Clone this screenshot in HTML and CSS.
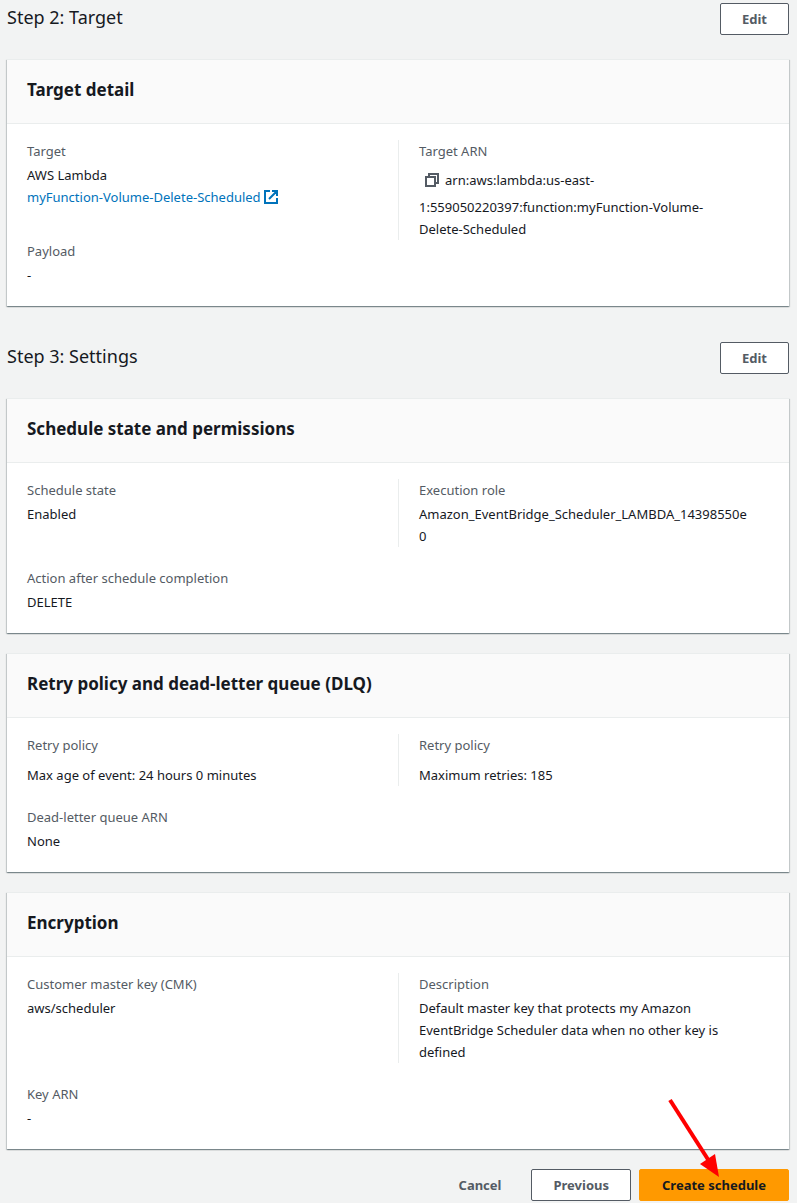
FILE: index.html
```html
<!DOCTYPE html>
<html lang="en">
<head>
<meta charset="utf-8">
<title>Create schedule</title>
<link rel="stylesheet" href="styles.css">
</head>
<body>
<main class="page">
  <header class="step">
    <h2 class="step-title">Step 2: Target</h2>
    <button class="btn" type="button">Edit</button>
  </header>

  <section class="panel">
    <h3 class="panel-title">Target detail</h3>
    <div class="panel-body panel-body-tight">
      <div class="row">
        <div class="field">
          <div class="label">Target</div>
          <div class="value">AWS Lambda</div>
          <div class="value"><a class="link" href="#">myFunction-Volume-Delete-Scheduled
            <svg class="icon" viewBox="0 0 14 14" aria-hidden="true"><path d="M6 1H1v12h12V8M8 1h5v5M13 1L5 9"/></svg></a></div>
        </div>
        <div class="field">
          <div class="label">Target ARN</div>
          <div class="value"><span class="copy-line"><button class="copy" type="button" aria-label="Copy ARN"><svg class="icon" viewBox="0 0 14 14" aria-hidden="true"><path d="M1 4h9v9H1zM4 4V1h9v9h-3"/></svg></button>arn:aws:lambda:us-east-</span>1:559050220397:function:myFunction-Volume-<br>Delete-Scheduled</div>
        </div>
      </div>
      <div class="row">
        <div class="field">
          <div class="label">Payload</div>
          <div class="value">-</div>
        </div>
      </div>
    </div>
  </section>

  <header class="step step-next">
    <h2 class="step-title">Step 3: Settings</h2>
    <button class="btn" type="button">Edit</button>
  </header>

  <section class="panel">
    <h3 class="panel-title">Schedule state and permissions</h3>
    <div class="panel-body">
      <div class="row">
        <div class="field">
          <div class="label">Schedule state</div>
          <div class="value">Enabled</div>
        </div>
        <div class="field">
          <div class="label">Execution role</div>
          <div class="value">Amazon_EventBridge_Scheduler_LAMBDA_14398550e<br>0</div>
        </div>
      </div>
      <div class="row">
        <div class="field">
          <div class="label">Action after schedule completion</div>
          <div class="value">DELETE</div>
        </div>
      </div>
    </div>
  </section>

  <section class="panel">
    <h3 class="panel-title">Retry policy and dead-letter queue (DLQ)</h3>
    <div class="panel-body">
      <div class="row">
        <div class="field field-spaced">
          <div class="label">Retry policy</div>
          <div class="value">Max age of event: 24 hours 0 minutes</div>
        </div>
        <div class="field field-spaced">
          <div class="label">Retry policy</div>
          <div class="value">Maximum retries: 185</div>
        </div>
      </div>
      <div class="row">
        <div class="field">
          <div class="label">Dead-letter queue ARN</div>
          <div class="value">None</div>
        </div>
      </div>
    </div>
  </section>

  <section class="panel">
    <h3 class="panel-title">Encryption</h3>
    <div class="panel-body">
      <div class="row">
        <div class="field">
          <div class="label">Customer master key (CMK)</div>
          <div class="value">aws/scheduler</div>
        </div>
        <div class="field">
          <div class="label">Description</div>
          <div class="value">Default master key that protects my Amazon<br>EventBridge Scheduler data when no other key is<br>defined</div>
        </div>
      </div>
      <div class="row">
        <div class="field">
          <div class="label">Key ARN</div>
          <div class="value">-</div>
        </div>
      </div>
    </div>
  </section>

  <footer class="actions">
    <button class="btn btn-plain" type="button">Cancel</button>
    <button class="btn" type="button">Previous</button>
    <div class="create">
      <button class="btn btn-primary" type="button">Create schedule</button>
      <svg class="arrow" viewBox="0 0 60 84" aria-hidden="true"><path class="arrow-line" d="M7 4L46 65"/><path class="arrow-head" d="M37 68L52 58L56 81Z"/></svg>
    </div>
  </footer>
</main>
</body>
</html>
```
FILE: styles.css
```css
* {
  box-sizing: border-box;
}

body {
  margin: 0;
  background: #f2f3f3;
  color: #16191f;
  font-family: "Noto Sans", "Open Sans", sans-serif;
  font-size: 13px;
  line-height: 22px;
}

.page {
  padding: 3px 8px 2px 7px;
}

.step {
  display: flex;
  justify-content: space-between;
  align-items: flex-start;
  margin-bottom: 24px;
}

.step-next {
  margin-top: 36px;
}

.step-title {
  margin: 0;
  font-size: 18px;
  line-height: 28px;
  font-weight: 400;
}

.btn {
  height: 32px;
  padding: 0 21px;
  border: 1px solid #545b64;
  border-radius: 2px;
  background: #fff;
  color: #545b64;
  font: 700 13px/22px "Noto Sans", "Open Sans", sans-serif;
  white-space: nowrap;
}

.panel {
  margin-bottom: 20px;
  border-top: 1px solid #eaeded;
  background: #fff;
  box-shadow: 0 1px 1px 0 rgba(0, 28, 36, 0.3),
    1px 1px 1px 0 rgba(0, 28, 36, 0.15),
    -1px 1px 1px 0 rgba(0, 28, 36, 0.15);
}

.panel-title {
  margin: 0;
  padding: 18px 20px 21px;
  border-bottom: 1px solid #eaeded;
  background: #fafafa;
  font-size: 17px;
  line-height: 24px;
  font-weight: 700;
}

.panel-body {
  display: grid;
  gap: 20px;
  padding: 16px 20px 20px;
}

.panel-body-tight {
  gap: 0;
}

.row {
  display: grid;
  grid-template-columns: minmax(0, 1fr) minmax(0, 1fr);
}

.field {
  padding-right: 20px;
}

.field + .field {
  padding: 0 0 0 20px;
  border-left: 1px solid #eaeded;
}

.label {
  margin-bottom: 2px;
  color: #545b64;
}

.field-spaced .label {
  margin-bottom: 8px;
}

.value {
  overflow-wrap: anywhere;
}

.link {
  color: #0073bb;
  text-decoration: none;
  white-space: nowrap;
}

.icon {
  width: 14px;
  height: 14px;
  fill: none;
  stroke: currentColor;
  stroke-width: 2;
  vertical-align: -2px;
}

.copy-line {
  display: flex;
  align-items: center;
  height: 32px;
}

.copy {
  display: flex;
  padding: 0 6px;
  border: 0;
  background: none;
  color: #545b64;
}

.actions {
  display: flex;
  justify-content: flex-end;
  gap: 8px;
}

.btn-plain {
  border-color: transparent;
  background: transparent;
}

.create {
  position: relative;
}

.btn-primary {
  padding: 0 22px;
  border-color: #f90;
  background: #f90;
  color: #16191f;
}

.arrow {
  position: absolute;
  right: 66px;
  bottom: 21px;
  width: 60px;
  height: 84px;
  pointer-events: none;
}

.arrow-line {
  fill: none;
  stroke: #f00;
  stroke-width: 4;
}

.arrow-head {
  fill: #f00;
}
```
